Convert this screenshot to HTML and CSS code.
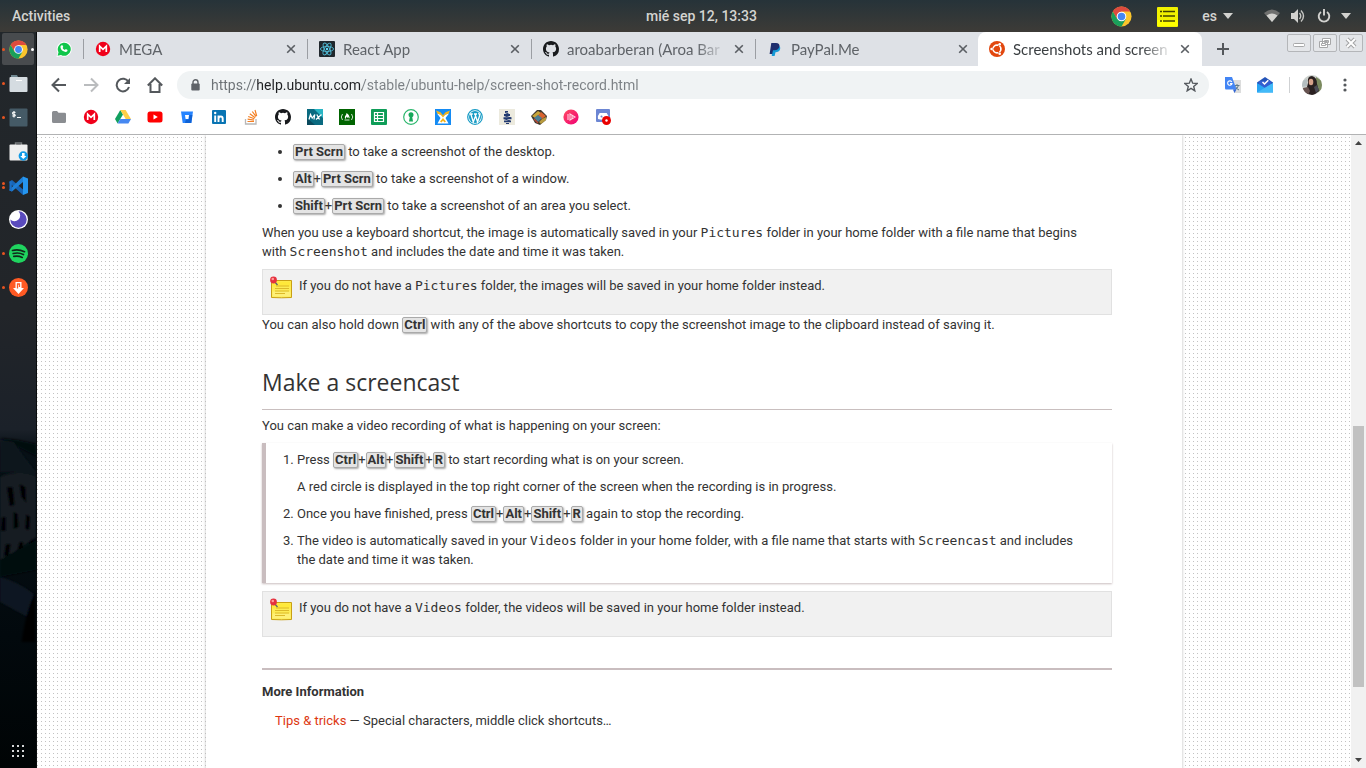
FILE: index.html
```html
<!DOCTYPE html>
<html lang="en">
<head>
<meta charset="utf-8">
<meta name="viewport" content="width=device-width, initial-scale=1">
<title>Screenshots and screencasts</title>
<link rel="stylesheet" href="styles.css">
</head>
<body>
<svg class="defs" aria-hidden="true">
  <defs>
    <symbol id="chrome" viewBox="0 0 48 48">
      <circle cx="24" cy="24" r="23" fill="#fbc52c"/>
      <path d="M4.1 12.5A23 23 0 0 1 43.9 12.5H24L14 29.7Z" fill="#dd4b3e"/>
      <path d="M4.1 12.5A23 23 0 0 0 24 47L34 29.7H14Z" fill="#1a9f5b"/>
      <circle cx="24" cy="24" r="11" fill="#fff"/>
      <circle cx="24" cy="24" r="8.600" fill="#4587f3"/>
    </symbol>
    <symbol id="mega" viewBox="0 0 16 16">
      <circle cx="8" cy="8" r="7.200" fill="#f0001a"/>
      <path d="M4.700 11V5.200L8 8.300L11.300 5.200V11" fill="none" stroke="#fff" stroke-width="1.700"/>
    </symbol>
    <symbol id="github" viewBox="0 0 16 16">
      <path fill="#181a1d" d="M8 0C3.580 0 0 3.580 0 8c0 3.540 2.290 6.530 5.470 7.590.4.070.55-.17.55-.38 0-.19-.01-.82-.01-1.490-2.010.37-2.530-.49-2.690-.94-.09-.23-.48-.94-.82-1.130-.28-.15-.68-.52-.01-.53.63-.01 1.080.58 1.230.82.72 1.210 1.870.87 2.330.66.07-.52.28-.87.51-1.070-1.780-.2-3.640-.89-3.640-3.950 0-.87.31-1.590.82-2.150-.08-.2-.36-1.020.08-2.120 0 0 .67-.21 2.200.82a7.600 7.600 0 0 1 4 0c1.530-1.040 2.200-.82 2.200-.82.44 1.100.16 1.920.08 2.120.51.56.82 1.270.82 2.150 0 3.070-1.870 3.750-3.650 3.950.29.25.54.73.54 1.480 0 1.070-.01 1.930-.01 2.200 0 .21.15.46.55.38A8 8 0 0 0 16 8c0-4.420-3.580-8-8-8z"/>
    </symbol>
    <symbol id="close" viewBox="0 0 10 10">
      <path d="M1.200 1.200l7.600 7.600M8.800 1.200L1.200 8.800" stroke="#5a5e63" stroke-width="1.600"/>
    </symbol>
    <symbol id="note" viewBox="0 0 24 24">
      <path d="M2.500 4.500h20v17q-10 .6-20 0z" fill="#fdec55" stroke="#c9a014"/>
      <path d="M3.500 5.500h18v5h-18z" fill="#ffe93a"/>
      <path d="M3.500 15.500h18v5h-18z" fill="#fff390" opacity=".6"/>
      <path d="M7 10h13M6 12.500h14M6 15h14M6 17.500h10" stroke="#dcb92a"/>
      <path d="M5 5l3.500 4" stroke="#5d6570" stroke-width="1.300"/>
      <circle cx="4.500" cy="4" r="3.400" fill="#e5313f"/>
      <circle cx="3.800" cy="3" r="1.300" fill="#ff9999"/>
    </symbol>
  </defs>
</svg>

<header class="topbar">
  <button class="topbar-btn" type="button">Activities</button>
  <time class="clock">mié sep 12, 13:33</time>
  <div class="tray">
    <svg class="i21"><use href="#chrome"/></svg>
    <svg class="i21 tray-list" viewBox="0 0 21 21"><rect y="1" width="21" height="20" rx="1" fill="#f1f100"/><path d="M0 14h21v6H0z" fill="#ff0"/><path d="M3 5.500h2M3 10h2M3 15h2M6 5.500h12M6 10h12M6 15h12" stroke="#414100" stroke-width="1.500"/></svg>
    <button class="topbar-btn lang" type="button">es <svg class="caret" viewBox="0 0 10 6"><path d="M0 0h10L5 6z"/></svg></button>
    <svg class="i16 wifi" viewBox="0 0 16 16"><path d="M0 5Q8-2 16 5L8 14z" fill="#6f706f"/><path d="M2.500 7.500Q8 3.500 13.500 7.500L8 14z" fill="#d2d2cf"/></svg>
    <svg class="i16 volume" viewBox="0 0 16 16"><path d="M1 5h3l4-4v14l-4-4H1z" fill="#d2d2cf"/><path d="M9.500 5q2.500 3 0 6M11 2.500q5 5.500 0 11" fill="none" stroke="#c6c6c3" stroke-width="1.400"/></svg>
    <svg class="i14 power" viewBox="0 0 14 14"><path d="M4 3a5.300 5.300 0 1 0 6 0M7 0v6.500" fill="none" stroke="#d2d2cf" stroke-width="1.900"/></svg>
    <svg class="caret" viewBox="0 0 10 6"><path d="M0 0h10L5 6z"/></svg>
  </div>
</header>

<div class="desktop">
  <nav class="dock" aria-label="Dock">
    <svg class="wallpaper" viewBox="0 0 37 736" preserveAspectRatio="none">
      <defs>
        <linearGradient id="night" x2="0" y2="1"><stop stop-color="#22272b"/><stop offset=".38" stop-color="#222529"/><stop offset=".54" stop-color="#1b2129"/><stop offset=".57" stop-color="#071016"/><stop offset=".82" stop-color="#02090d"/><stop offset="1" stop-color="#000405"/></linearGradient>
        <filter id="soft"><feGaussianBlur stdDeviation="1"/></filter>
      </defs>
      <path d="M0 0h37v736H0z" fill="url(#night)"/>
      <g filter="url(#soft)">
        <path d="M18 408l19 4v12L0 406z" fill="#05090c"/>
        <path d="M0 408l14 2 10 14L37 440v14L16 440H0z" fill="#0d171e"/>
        <path d="M0 445q18-8 37 0v60L0 530z" fill="#171e22"/>
        <path d="M7 455l6 0 2 18-5 1zM20 452l6 3 1 16-5-6zM2 485l4 0 0 14-5 0zM14 480l4 2 1 13-5 2zM27 482l4 3-1 13-4-1zM6 512l5 0-2 12-5 0zM20 510l4 0-2 12-5 0zM31 508l4 0v10l-5 0z" fill="#010304"/>
        <path d="M0 528l37-20v30L0 545z" fill="#05090b"/>
        <path d="M0 545q20 5 36 18L28 585 0 570z" fill="#0d1720"/>
        <path d="M36 560v50H22q5-32 14-50z" fill="#020506"/>
      </g>
    </svg>
    <button class="app active" type="button" aria-label="Chrome"><i class="dot"></i><svg class="i19"><use href="#chrome"/></svg><i class="dot focus"></i></button>
    <button class="app" type="button" aria-label="Files"><i class="dot"></i><svg class="i19" viewBox="0 0 19 19"><path d="M2 1h6l1 2h8v5H2z" fill="#6f8791"/><rect x=".5" y="3" width="18" height="15" rx="1" fill="#d5dce1"/><path d="M7 6.500h6" stroke="#fff"/></svg></button>
    <button class="app" type="button" aria-label="Terminal"><i class="dot"></i><svg class="i19" viewBox="0 0 19 19"><rect x=".5" y=".5" width="18" height="18" rx="1" fill="#455a66"/><path d="M6.500 4.500q-3-1-3 .7 0 1 1.500 1.200 1.500.3 1.300 1.200-.6 1.200-3 .2M5 3v6.500M8 9.500h4" fill="none" stroke="#f5f7f7" stroke-width="1.100"/></svg></button>
    <button class="app" type="button" aria-label="Software"><svg class="i19" viewBox="0 0 19 19"><path d="M6.500 3V1h6v2" fill="none" stroke="#777b7d" stroke-width="1.400"/><rect x=".5" y="2.500" width="18" height="16" rx="1" fill="#efefef"/><circle cx="14.300" cy="14" r="4.700" fill="#119ae6"/><path d="M13 11h2.600v3h1.800l-3.100 3-3.100-3H13z" fill="#fff"/></svg></button>
    <button class="app" type="button" aria-label="Code"><i class="dot pair"></i><svg class="i19" viewBox="0 0 19 19"><path d="M.5 5.500L3 4l11 9.500V19L.5 7z" fill="#1765b8"/><path d="M.5 13.500L14 .5v5.500L3 15.500.5 14.500z" fill="#1f7fd6"/><path d="M.5 5.500h2.300v10L.5 14.500z" fill="#1b6fc6"/><path d="M14 .5l5 2v14.500l-5 2z" fill="#2596f0"/></svg></button>
    <button class="app" type="button" aria-label="Insomnia"><svg class="i19" viewBox="0 0 19 19"><circle cx="9.500" cy="9.500" r="9.500" fill="#fff"/><path d="M9.500 1.300a8.200 8.200 0 1 1-8.200 8.200 4.500 4.500 0 1 0 8.200-8.200z" fill="#5a4bbd"/></svg></button>
    <button class="app" type="button" aria-label="Spotify"><i class="dot"></i><svg class="i19" viewBox="0 0 19 19"><circle cx="9.500" cy="9.500" r="9.500" fill="#1fd45f"/><path d="M3.500 6.500q6-1.600 12 1.200M4.200 9.500q5.500-1.400 10.200 1M4.800 12.400q4.500-1 8.400 1" fill="none" stroke="#10291a" stroke-width="1.700" stroke-linecap="round"/></svg></button>
    <button class="app" type="button" aria-label="Music downloader"><i class="dot"></i><svg class="i19" viewBox="0 0 19 19"><circle cx="9.500" cy="9.500" r="9.500" fill="#ff5a24"/><path d="M6.500 4h6v6H15l-5.500 6L4 10h2.500z" fill="#fff"/><path d="M8.500 10.500V6h2v3" fill="none" stroke="#ff5a24" stroke-width="1.300"/></svg></button>
    <button class="app all-apps" type="button" aria-label="Show applications"><svg class="i14" viewBox="0 0 14 14" fill="#d5d7d8"><path d="M1 1h2v2H1zM6 1h2v2H6zM11 1h2v2h-2zM1 6h2v2H1zM6 6h2v2H6zM11 6h2v2h-2zM1 11h2v2H1zM6 11h2v2H6zM11 11h2v2h-2z"/></svg></button>
  </nav>

  <main class="browser">
    <div class="tabs">
      <button class="tab pinned" type="button" aria-label="WhatsApp"><svg class="i16" viewBox="0 0 16 16"><path d="M.5 16L1.600 11.800A7.500 7.500 0 1 1 4.800 14.900z" fill="#fff"/><path d="M1.600 14.800l.9-3.500A6.500 6.500 0 1 1 5 13.900z" fill="#10c64b"/><path d="M5.600 4.200l.9 0 .8 1.800-.7.9q.8 1.500 2.300 2.100l.9-.9 1.800.9q0 2-2 2-4.500-.6-5.200-4.900 0-1.200 1.200-1.900z" fill="#fff"/></svg></button>
      <div class="tab"><svg class="i16"><use href="#mega"/></svg><span class="tab-title">MEGA</span><button class="x" type="button" aria-label="Close tab"><svg><use href="#close"/></svg></button></div>
      <div class="tab"><svg class="i16" viewBox="0 0 16 16"><rect width="16" height="16" rx="1" fill="#20272d"/><g fill="none" stroke="#4fb9d3" stroke-width=".9"><ellipse cx="8" cy="8" rx="6.600" ry="2.500"/><ellipse cx="8" cy="8" rx="6.600" ry="2.500" transform="rotate(60 8 8)"/><ellipse cx="8" cy="8" rx="6.600" ry="2.500" transform="rotate(120 8 8)"/></g><circle cx="8" cy="8" r="1.200" fill="#61dafb"/></svg><span class="tab-title">React App</span><button class="x" type="button" aria-label="Close tab"><svg><use href="#close"/></svg></button></div>
      <div class="tab"><svg class="i16"><use href="#github"/></svg><span class="tab-title">aroabarberan (Aroa Bar</span><button class="x" type="button" aria-label="Close tab"><svg><use href="#close"/></svg></button></div>
      <div class="tab"><svg class="i16" viewBox="0 0 16 16"><path d="M5 4.500h6q3 .8 2 4-1 2.700-4.500 2.700L7.600 15H4.800z" fill="#169bd7"/><path d="M4.300 2H9q4 .2 3.400 3.600Q11.700 9.200 7.500 9.200H6L5.200 13H2.600z" fill="#1f2f6e"/></svg><span class="tab-title">PayPal.Me</span><button class="x" type="button" aria-label="Close tab"><svg><use href="#close"/></svg></button></div>
      <div class="tab current"><svg class="i16" viewBox="0 0 16 16"><circle cx="8" cy="8" r="8" fill="#e2470e"/><circle cx="8" cy="8" r="3.900" fill="none" stroke="#fff" stroke-width="1.700"/><g stroke="#e2470e" stroke-width="1.100"><path d="M8 8H2M8 8l3-5.300M8 8l3 5.300"/></g><circle cx="8" cy="8" r="2.700" fill="#e2470e"/><g fill="#fff"><circle cx="2.600" cy="8" r="1.300"/><circle cx="10.700" cy="3.300" r="1.300"/><circle cx="10.700" cy="12.700" r="1.300"/></g></svg><span class="tab-title">Screenshots and screen</span><button class="x" type="button" aria-label="Close tab"><svg><use href="#close"/></svg></button></div>
      <button class="new-tab" type="button" aria-label="New tab"><svg class="i14" viewBox="0 0 14 14"><path d="M7 1v12M1 7h12" stroke="#54585c" stroke-width="2"/></svg></button>
      <div class="window-buttons">
        <button type="button" aria-label="Minimize"><svg viewBox="0 0 22 16"><rect x="5.500" y="8.500" width="11" height="3" rx="1" fill="#fff" stroke="#a6a7a8"/></svg></button>
        <button type="button" aria-label="Restore"><svg viewBox="0 0 22 16" fill="#fff" stroke="#a6a7a8"><path d="M8.500 3.500h8v6h-8zM10.500 5.500h4v2h-4zM5.500 6.500h8v6h-8z"/><path d="M7.500 8.500h4v2h-4z"/></svg></button>
        <button type="button" aria-label="Close"><svg viewBox="0 0 22 16"><path d="M7 4l8 8M15 4l-8 8" stroke="#a3a4a5" stroke-width="4"/><path d="M7 4l8 8M15 4l-8 8" stroke="#fff" stroke-width="2"/></svg></button>
      </div>
    </div>

    <div class="toolbar">
      <button class="tool" type="button" aria-label="Back"><svg class="i16" viewBox="0 0 16 16"><path d="M15 8H2M8 1.500L1.500 8 8 14.500"/></svg></button>
      <button class="tool off" type="button" aria-label="Forward"><svg class="i16" viewBox="0 0 16 16"><path d="M1 8h13M8 1.500L14.500 8 8 14.500"/></svg></button>
      <button class="tool" type="button" aria-label="Reload"><svg class="i16" viewBox="0 0 16 16"><path d="M13.500 5A6.300 6.300 0 1 0 14 10"/><path d="M15 1v6H9z" fill="#54585c" stroke="none"/></svg></button>
      <button class="tool" type="button" aria-label="Home"><svg class="i16" viewBox="0 0 16 16"><path d="M.8 8.500L8 1.300l7.200 7.200M3.500 7v8h9V7"/></svg></button>
      <div class="omnibox">
        <svg class="lock" viewBox="0 0 9 12"><path d="M2 5V3.200a2.500 2.500 0 0 1 5 0V5" fill="none" stroke="#5f6368" stroke-width="1.400"/><rect x=".3" y="4.500" width="8.400" height="7" rx="1" fill="#5f6368"/></svg>
        <input class="url" type="text" aria-label="Address" value="https://help.ubuntu.com/stable/ubuntu-help/screen-shot-record.html">
        <svg class="i14" viewBox="0 0 14 14"><path d="M7 1l1.700 4.200 4.500.3-3.500 2.900 1.100 4.400L7 10.400l-3.800 2.400 1.100-4.400L.8 5.500l4.500-.3z" fill="none" stroke="#55595e" stroke-width="1.400"/></svg>
      </div>
      <div class="extensions">
        <svg class="i16" viewBox="0 0 16 16"><path d="M7 3h9v13H9z" fill="#dcdddd"/><path d="M9.500 8.500h5M12 7v1.500M13.500 8.500q-1 3-4 4.500M10.500 9.500q1 2.500 3.500 3.500" stroke="#607d8b" stroke-width="1" fill="none"/><path d="M0 0h7l4.500 12.500H1Q0 12.500 0 11z" fill="#4285f4"/><path d="M8 12.500h3.500L9.500 16z" fill="#3367d6"/><path d="M6.800 5A2.200 2.200 0 1 0 7 6.600H5" stroke="#fff" fill="none" stroke-width="1.100"/></svg>
        <svg class="i16" viewBox="0 0 16 16"><path d="M0 5.500L8 0l8 5.500v7H0z" fill="#2454b8"/><path d="M2 4h12v7H2z" fill="#315ed0"/><path d="M5.500 5l2 2 3.800-3.800" fill="none" stroke="#fff" stroke-width="1.500"/><path d="M0 6l8 5 8-5v9.500H0z" fill="#28a4f2"/><path d="M0 15.500L16 6v9.500z" fill="#42baf8"/></svg>
      </div>
      <svg class="avatar" viewBox="0 0 20 20"><clipPath id="round"><circle cx="10" cy="10" r="10"/></clipPath><g clip-path="url(#round)"><path d="M0 0h20v20H0z" fill="#ccd0cc"/><path d="M14 2l6 4v9l-6 3z" fill="#7b8a5e"/><path d="M0 6l5-2v7l-5 1z" fill="#b4bec0"/><path d="M6 8q-1-7 4-7 5 1 5 8l2 7-5 4H3L5 12z" fill="#292020"/><ellipse cx="9" cy="7" rx="2.300" ry="3.300" fill="#d6a189"/><path d="M1 13l5-1 2 4-2 4H2z" fill="#675350"/><path d="M12 12l3-2 2 5-3 3z" fill="#4b4b56"/></g></svg>
      <button class="menu" type="button" aria-label="Menu"><svg viewBox="0 0 4 14" fill="#54585c"><circle cx="2" cy="2" r="1.600"/><circle cx="2" cy="7" r="1.600"/><circle cx="2" cy="12" r="1.600"/></svg></button>
    </div>

    <nav class="bookmarks" aria-label="Bookmarks">
      <a href="#" aria-label="Folder"><svg class="i16" viewBox="0 0 16 16"><path d="M1 3.500Q1 2 2.500 2H6l1.500 1.700h6Q15 3.700 15 5v7.500q0 1.500-1.500 1.500h-11Q1 14 1 12.500z" fill="#8a8d91"/></svg></a>
      <a href="#" aria-label="MEGA"><svg class="i16"><use href="#mega"/></svg></a>
      <a href="#" aria-label="Drive"><svg class="i16" viewBox="0 0 16 16"><path d="M5.300 1L0 10l2.600 4.500L8 5.500z" fill="#11a05f"/><path d="M5.300 1h5.300L16 10h-5.300z" fill="#ffcf48"/><path d="M5.300 10H16l-2.600 4.500H2.600z" fill="#4688f1"/></svg></a>
      <a href="#" aria-label="YouTube"><svg class="i16" viewBox="0 0 16 16"><rect x=".5" y="2.500" width="15" height="11" rx="2.500" fill="#f00"/><path d="M6.500 5.500v5L10.800 8z" fill="#fff"/></svg></a>
      <a href="#" aria-label="Bitbucket"><svg class="i16" viewBox="0 0 16 16"><path d="M2 2.500h12L12.300 14H3.700z" fill="#2684ff"/><path d="M8 6h5.400L12.300 14H6z" fill="#0f62d5"/><path d="M5.500 5.500h5l-.8 5H6.300z" fill="#2684ff"/><path d="M6 6h4l-.6 4H6.600z" fill="#fff"/></svg></a>
      <a href="#" aria-label="LinkedIn"><svg class="i16" viewBox="0 0 16 16"><rect x="1" y="1" width="14" height="14" rx="1" fill="#0874b3"/><path d="M4.200 6.500V13M7.500 13V6.500M7.500 9.500q.3-2 2.300-2 1.900 0 1.900 2.300V13" fill="none" stroke="#fff" stroke-width="1.900"/><circle cx="4.200" cy="4" r="1.200" fill="#fff"/></svg></a>
      <a href="#" aria-label="Stack Overflow"><svg class="i16" viewBox="0 0 16 16" fill="none"><path d="M2.500 10v5h10.500v-5" stroke="#b8b8b8" stroke-width="1.300"/><path d="M4.500 12.500h6.500M4.600 10.200l6.400 1M5.200 7.500l6.200 2.300M6.800 4.800l5.400 4M9.300 2.500l3.800 5.200M12 1l1.700 6" stroke="#f48024" stroke-width="1.200"/></svg></a>
      <a href="#" aria-label="GitHub"><svg class="i16"><use href="#github"/></svg></a>
      <a href="#" aria-label="MX"><svg class="i16" viewBox="0 0 16 16"><path d="M0 0h16v16H0z" fill="#0a6a80"/><path d="M7 0h9v9z" fill="#29b5c4"/><path d="M0 9l8 7H0z" fill="#09495d"/><path d="M2 10.500L3.500 5.500 5.200 9 7.800 5.500 7 10.500M9.800 5.500l2.700 5M14.500 5.500l-5.500 5" fill="none" stroke="#fff" stroke-width="1.200"/></svg></a>
      <a href="#" aria-label="freeCodeCamp"><svg class="i16" viewBox="0 0 16 16"><path d="M0 0h16v16H0z" fill="#006400"/><path d="M3.500 5q-2.500 3 0 6M12.500 5q2.500 3 0 6M5.500 11h5" fill="none" stroke="#e4efe4" stroke-width=".9"/><path d="M7.500 4q0 2-1.500 3.300Q5.200 9 7 10.300 6.500 8.700 8 7.500q0 1.400 1 1.500.7-.3.300-1.200Q10.800 9 9.500 10.300q2-1.500.6-3.500Q9.500 5 7.500 4z" fill="#fff"/></svg></a>
      <a href="#" aria-label="Sheets"><svg class="i16" viewBox="0 0 16 16"><rect width="16" height="16" rx="1" fill="#0f9d58"/><path d="M3.500 3.500h9v9h-9zM3.500 6.500h9M3.500 9.500h9M6.500 3.500v9" fill="none" stroke="#fff" stroke-width="1.200"/></svg></a>
      <a href="#" aria-label="Keys"><svg class="i16" viewBox="0 0 16 16"><circle cx="8" cy="8" r="7.300" fill="#fff" stroke="#2bb76d" stroke-width="1.200"/><circle cx="8" cy="5.700" r="2.500" fill="#17a85a"/><path d="M7 7h2l1 5.500H6z" fill="#17a85a"/></svg></a>
      <a href="#" aria-label="Wiki tools"><svg class="i16" viewBox="0 0 16 16"><path d="M0 0h16v16H0z" fill="#148bf4"/><path d="M2 4.500l3.500 1L8 7.500l2.500-2 3.500-1-3.500 4.500 3 5.500h-11l3-5.500z" fill="#fff"/><path d="M1 1.500l4.500 1.700L8 6.200l2.500-3L15 1.500l-1.500 3.300-3.300 1L8 8.500l-2.200-2.700-3.300-1z" fill="#f5b31a"/><path d="M8 9l3 3.500-1.500 1L8 11.800 6.500 13.500l-1.500-1z" fill="#f5b31a"/></svg></a>
      <a href="#" aria-label="WordPress"><svg class="i16" viewBox="0 0 16 16"><circle cx="8" cy="8" r="7.300" fill="#fff" stroke="#169bc5" stroke-width="1.200"/><circle cx="8" cy="8" r="6" fill="#169bc5"/><path d="M2.800 5h3M3.800 5l2.500 8L8.300 7.500M7 5h3M8 5l2.600 8L12.500 7q.3-1.500-1-3" fill="none" stroke="#fff" stroke-width="1.300"/></svg></a>
      <a href="#" aria-label="Beehive"><svg class="i16" viewBox="0 0 16 16"><path d="M0 0h16v16H0z" fill="#eceade"/><path d="M6 2h3v1.500H6zM5 5h6v2H5zM4.500 8.300h8v2h-8zM5 11.500h7v1.700H5zM7 14h3v1H7z" fill="#223a70"/><path d="M6 3.500l4.500 2M5 6.500l7 2.500M5 9.500l6 2.500" stroke="#223a70"/></svg></a>
      <a href="#" aria-label="Blocks"><svg class="i16" viewBox="0 0 16 16"><path d="M0 7l6-6h4l6 6-1 4-6 5-5-2z" fill="#3d372e"/><path d="M1 7l6-5 3 2-6 5z" fill="#c8a53a"/><path d="M10 3l5 4-4 3-4-3z" fill="#d9632f"/><path d="M3 9l4-3 4 3-4 4z" fill="#4b7f95"/><path d="M11 10l4-2v3l-5 4-2-2z" fill="#b89b3f"/><path d="M3 10l4 4" stroke="#b94a35" stroke-width="1.500"/></svg></a>
      <a href="#" aria-label="Play"><svg class="i16" viewBox="0 0 16 16"><linearGradient id="pink" x2="1" y2="1"><stop stop-color="#ff4b62"/><stop offset="1" stop-color="#f00075"/></linearGradient><circle cx="8" cy="8" r="7.600" fill="url(#pink)"/><path d="M5 5v6M7 5l5 3-5 3zM9 6.500v3" fill="none" stroke="#ffd2df" stroke-width="1.100"/></svg></a>
      <a href="#" aria-label="Discord"><svg class="i16" viewBox="0 0 16 16"><rect x="1" y="0" width="14" height="13" rx="1" fill="#6c86d3"/><path d="M3 10q-.5-4 1.700-6h7q2 2 1.500 6l-2 1-6-.5z" fill="#fff"/><circle cx="6.500" cy="7.500" r="1" fill="#6c86d3"/><circle cx="11.500" cy="11.500" r="4.500" fill="#e90000"/><circle cx="11.500" cy="11.500" r="1.200" fill="#fff"/></svg></a>
    </nav>

    <div class="viewport">
      <div class="backdrop">
        <article class="page">
          <ul class="shortcuts">
            <li><kbd>Prt Scrn</kbd> to take a screenshot of the desktop.</li>
            <li><kbd>Alt</kbd>+<kbd>Prt Scrn</kbd> to take a screenshot of a window.</li>
            <li><kbd>Shift</kbd>+<kbd>Prt Scrn</kbd> to take a screenshot of an area you select.</li>
          </ul>
          <p>When you use a keyboard shortcut, the image is automatically saved in your <code>Pictures</code> folder in your home folder with a file name that begins with&nbsp;<code>Screenshot</code> and includes the date and time it was taken.</p>
          <div class="note"><svg class="i24"><use href="#note"/></svg><p>If you do not have a <code>Pictures</code> folder, the images will be saved in your home folder instead.</p></div>
          <p>You can also hold down <kbd>Ctrl</kbd> with any of the above shortcuts to copy the screenshot image to the clipboard instead of saving it.</p>
          <h2>Make a screencast</h2>
          <p>You can make a video recording of what is happening on your screen:</p>
          <ol class="steps">
            <li><p>Press <kbd>Ctrl</kbd>+<kbd>Alt</kbd>+<kbd>Shift</kbd>+<kbd>R</kbd> to start recording what is on your screen.</p><p>A red circle is displayed in the top right corner of the screen when the recording is in progress.</p></li>
            <li><p>Once you have finished, press <kbd>Ctrl</kbd>+<kbd>Alt</kbd>+<kbd>Shift</kbd>+<kbd>R</kbd> again to stop the recording.</p></li>
            <li><p>The video is automatically saved in your <code>Videos</code> folder in your home folder, with a file name that starts with <code>Screencast</code> and includes the date and time it was taken.</p></li>
          </ol>
          <div class="note"><svg class="i24"><use href="#note"/></svg><p>If you do not have a <code>Videos</code> folder, the videos will be saved in your home folder instead.</p></div>
          <section class="more">
            <h3>More Information</h3>
            <p><a href="#">Tips &amp; tricks</a> — Special characters, middle click shortcuts…</p>
          </section>
        </article>
      </div>
      <div class="scrollbar"><svg class="arrow" viewBox="0 0 7 4"><path d="M0 4h7L3.500 0z"/></svg><div class="track"><div class="thumb"></div></div><svg class="arrow" viewBox="0 0 7 4"><path d="M0 0h7L3.500 4z"/></svg></div>
    </div>
  </main>
</div>
</body>
</html>
```
FILE: styles.css
```css
* { box-sizing: border-box; }
body {
  margin: 0;
  height: 100vh;
  display: flex;
  flex-direction: column;
  overflow: hidden;
  font: 13px/19px Roboto, "Open Sans", sans-serif;
  color: #333;
}
button { padding: 0; border: 0; background: none; font: inherit; color: inherit; }
svg { display: block; flex: none; }
p, h2, h3, ul, ol { margin: 0; }
.defs { position: absolute; width: 0; height: 0; }
.i14 { width: 14px; height: 14px; }
.i16 { width: 16px; height: 16px; }
.i19 { width: 19px; height: 19px; }
.i21 { width: 21px; height: 21px; }
.i24 { width: 24px; height: 24px; }

/* Top panel */
.topbar {
  height: 32px;
  flex: none;
  display: grid;
  grid-template-columns: 1fr auto 1fr;
  align-items: center;
  padding: 0 15px 0 12px;
  background: linear-gradient(#263339, #3d3b37);
  font: 500 14px/20px Roboto, sans-serif;
  color: #d4d4d1;
}
.topbar-btn { justify-self: start; }
.clock { padding-left: 40px; }
.tray { display: flex; align-items: center; justify-content: flex-end; }
.tray-list { margin-left: 25px; }
.lang { display: flex; align-items: center; gap: 6px; margin: 0 31px 0 24px; }
.caret { width: 10px; height: 6px; fill: #d2d2cf; }
.volume { margin: 0 11px 0 10px; }
.power { margin-right: 10px; }

.desktop { flex: 1; min-height: 0; display: flex; }

/* Dock */
.dock {
  position: relative;
  width: 37px;
  flex: none;
  display: flex;
  flex-direction: column;
  gap: 2px;
  padding: 1px 0;
  border-right: 1px solid #0b0d0e;
  background: #05090c;
}
.wallpaper { position: absolute; inset: 0; width: 100%; height: 100%; }
.app {
  position: relative;
  height: 32px;
  margin-left: 2px;
  margin-right: 2px;
  display: flex;
  align-items: center;
  justify-content: center;
  border-radius: 2px;
}
.app.active { background: #484b4e; }
.dot { position: absolute; left: 0; width: 3px; height: 3px; border-radius: 2px; background: #e95420; }
.dot.focus { left: auto; right: 0; background: #fff; }
.dot.pair { box-shadow: 0 4px #e95420; margin-bottom: 4px; }
.all-apps { margin-top: auto; }

/* Browser frame */
.browser { flex: 1; min-width: 0; display: flex; flex-direction: column; background: #fff; }
.tabs {
  height: 34px;
  flex: none;
  display: flex;
  align-items: center;
  background: #dee1e6;
  font-family: Lato, "Open Sans", sans-serif;
  font-size: 15px;
  color: #5f6368;
}
.tab {
  flex: 0 1 224px;
  min-width: 0;
  height: 34px;
  display: flex;
  align-items: center;
  gap: 8px;
  padding: 0 12px 0 11px;
  background: linear-gradient(#9b9ea3, #9b9ea3) no-repeat right 7px / 1px 20px;
}
.tab.pinned { flex: 0 0 47px; padding: 0 0 0 19px; }
.tab:has(+ .current) { background: none; }
.tab.current { margin-left: -2px; background: #fff; border-radius: 8px 8px 0 0; color: #3c4043; }
.tab-title {
  flex: 1;
  overflow: hidden;
  white-space: nowrap;
  mask-image: linear-gradient(90deg, #000 calc(100% - 30px), transparent);
}
.x svg { width: 10px; height: 10px; }
.new-tab { margin-left: 14px; }
.window-buttons { margin: -12px 3px 0 auto; display: flex; gap: 2px; }
.window-buttons button { width: 24px; height: 18px; border: 1px solid #b4b6b9; border-radius: 2px; background: #e4e6e9; }
.window-buttons svg { width: 22px; height: 16px; }

.toolbar { height: 37px; flex: none; display: flex; align-items: center; padding-left: 14px; }
.tool { margin-right: 16px; }
.tool svg { fill: none; stroke: #54585c; stroke-width: 2; }
.tool.off svg { stroke: #babcbe; }
.omnibox {
  flex: 1;
  min-width: 0;
  height: 28px;
  display: flex;
  align-items: center;
  margin-left: -2px;
  padding: 0 11px 0 14px;
  border-radius: 14px;
  background: #f0f3f4;
}
.lock { width: 9px; height: 12px; }
.url {
  flex: 1;
  min-width: 0;
  padding: 0 0 0 11px;
  border: 0;
  outline: 0;
  font: 14px/20px Roboto, "Open Sans", sans-serif;
  color: transparent;
  background: linear-gradient(90deg, #6b7074 56px, #202124 56px 162px, #7b8084 162px) text;
}
.extensions { display: flex; gap: 16px; margin: 0 12px 0 16px; padding-right: 16px; border-right: 1px solid #cfd1d3; height: 16px; }
.avatar { width: 20px; height: 20px; }
.menu { margin: 0 19px 0 21px; }
.menu svg { width: 4px; height: 14px; }

.bookmarks {
  height: 32px;
  flex: none;
  display: flex;
  align-items: center;
  gap: 16px;
  padding: 0 14px 4px;
  border-bottom: 1px solid #b2b3b4;
}

/* Help page */
.viewport { flex: 1; min-height: 0; display: flex; }
.backdrop {
  flex: 1;
  min-width: 0;
  overflow: hidden;
  background:
    linear-gradient(90deg, transparent 1px, #fff 1px) 0 2px / 4px 4px,
    linear-gradient(#c2c2c2 1px, #fff 1px) 0 2px / 4px 4px;
}
.page {
  max-width: 976px;
  min-height: 100%;
  margin: 0 auto;
  padding: 7px 70px 40px 56px;
  background: #fff;
  box-shadow: 0 0 3px #bbb;
}
.shortcuts { padding-left: 31px; }
.shortcuts li { margin-bottom: 8px; }
kbd {
  display: inline-block;
  padding: 0 1px;
  border: 1px solid #aaa;
  border-radius: 2px;
  background: #e4e4e4;
  box-shadow: 1px 1px 2px #aaa;
  font: bold 13px/14px Roboto, "Open Sans", sans-serif;
}
code { font: 13px/15px "DejaVu Sans Mono", monospace; }
.note {
  display: flex;
  gap: 6px;
  min-height: 46px;
  margin-top: 8px;
  padding: 6px;
  border: 1px solid #e1e1e1;
  background: #f1f1f1;
}
h2 {
  margin: 32px 0 6px;
  padding-bottom: 11px;
  border-bottom: 1px solid #c9bfbf;
  font-family: "Open Sans", "Noto Sans", sans-serif;
  font-size: 23px;
  line-height: 32px;
  font-weight: 400;
}
.steps {
  margin-top: 8px;
  padding: 7px 20px 14px 31px;
  border-left: 4px solid #c9bdbf;
  box-shadow: 0 1px 2px #c9bdbf;
}
.steps li + li, .steps p + p { margin-top: 8px; }
.more { margin-top: 31px; padding-top: 12px; border-top: 2px solid #c9bdbf; }
.more h3 { font-size: 13px; }
.more p { margin: 10px 0 0 13px; }
.more a { color: #dd3711; text-decoration: none; }

.scrollbar {
  width: 15px;
  flex: none;
  display: flex;
  flex-direction: column;
  align-items: center;
  padding: 6px 0;
  background: #f1f1f1;
}
.arrow { width: 7px; height: 4px; fill: #444; }
.track { flex: 1; display: flex; flex-direction: column; width: 11px; padding: 5px 0; }
.track::before { content: ""; flex: 276; }
.track::after { content: ""; flex: 66; }
.thumb { flex: 261; background: #c1c1c1; }
```
